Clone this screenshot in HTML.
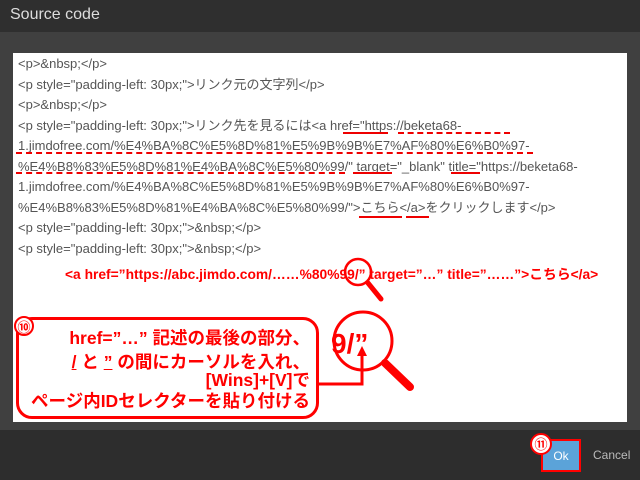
<!DOCTYPE html>
<html><head><meta charset="utf-8"><style>
body{margin:0;width:640px;height:480px;background:#404040;position:relative;overflow:hidden;font-family:"Liberation Sans","Noto Sans CJK JP",sans-serif}
.title{position:absolute;left:0;top:0;width:640px;height:32px;background:#2f2f2f;color:#ddd;font-size:16px;line-height:30px;padding-left:10px;box-sizing:border-box}
.ta{position:absolute;left:13px;top:53px;width:614px;height:369px;background:#fff}
.l{position:absolute;left:5px;font-size:13px;color:#555;white-space:nowrap;line-height:16px}
.foot{position:absolute;left:0;top:430px;width:640px;height:50px;background:#2d2d2d}
.r{color:#f00;font-weight:bold}
.u{position:absolute;border-bottom:2px solid #e00}
.d{position:absolute;border-bottom:2px dashed #e00}
.call{position:absolute;left:16px;top:317px;width:303px;height:102px;border:3px solid #f00;border-radius:16px;background:#fff;box-sizing:border-box}
.ct{position:absolute;right:6px;text-align:right;color:#f00;font-weight:bold;font-size:17.5px;line-height:20px;white-space:nowrap}
.num{position:absolute;width:20px;height:20px;border-radius:50%;background:#fff;border:2px solid #f00;color:#f00;font-size:13px;font-weight:bold;text-align:center;line-height:20px;box-sizing:border-box}
</style></head><body>
<div class="title">Source code</div>
<div class="ta">
<div class="l" style="top:3px">&lt;p&gt;&amp;nbsp;&lt;/p&gt;</div>
<div class="l" style="top:24px">&lt;p style="padding-left: 30px;"&gt;リンク元の文字列&lt;/p&gt;</div>
<div class="l" style="top:44px">&lt;p&gt;&amp;nbsp;&lt;/p&gt;</div>
<div class="l" style="top:65px">&lt;p style="padding-left: 30px;"&gt;リンク先を見るには&lt;a href="https://beketa68-</div>
<div class="l" style="top:85px">1.jimdofree.com/%E4%BA%8C%E5%8D%81%E5%9B%9B%E7%AF%80%E6%B0%97-</div>
<div class="l" style="top:106px">%E4%B8%83%E5%8D%81%E4%BA%8C%E5%80%99/" target="_blank" title="https://beketa68-</div>
<div class="l" style="top:126px">1.jimdofree.com/%E4%BA%8C%E5%8D%81%E5%9B%9B%E7%AF%80%E6%B0%97-</div>
<div class="l" style="top:147px">%E4%B8%83%E5%8D%81%E4%BA%8C%E5%80%99/"&gt;こちら&lt;/a&gt;をクリックします&lt;/p&gt;</div>
<div class="l" style="top:167px">&lt;p style="padding-left: 30px;"&gt;&amp;nbsp;&lt;/p&gt;</div>
<div class="l" style="top:188px">&lt;p style="padding-left: 30px;"&gt;&amp;nbsp;&lt;/p&gt;</div>
<div class="u" style="left:330px;top:79px;width:45px"></div>
<div class="d" style="left:385px;top:79px;width:112px"></div>
<div class="d" style="left:3px;top:99px;width:517px"></div>
<div class="d" style="left:3px;top:119px;width:329px"></div>
<div class="u" style="left:340px;top:119px;width:39px"></div>
<div class="u" style="left:438px;top:119px;width:29px"></div>
<div class="u" style="left:346px;top:163px;width:43px"></div>
<div class="u" style="left:393px;top:163px;width:23px"></div>
<div class="l r" style="top:214px;left:52px;font-size:13.8px;color:#f00">&lt;a href=”https://abc.jimdo.com/……%80%99/” target=”…” title=”……”&gt;こちら&lt;/a&gt;</div>
</div>
<div class="call">
<div class="ct" style="top:8px">href=”…” 記述の最後の部分、</div>
<div class="ct" style="top:32px"><u>/</u> と <u>”</u> の間にカーソルを入れ、</div>
<div class="ct" style="top:50px">[Wins]+[V]で</div>
<div class="ct" style="top:71px">ページ内IDセレクターを貼り付ける</div>
</div>
<div class="num" style="left:14px;top:316px">⑩</div>
<svg style="position:absolute;left:0;top:0" width="640" height="480">
<circle cx="358" cy="272" r="13" fill="none" stroke="#f00" stroke-width="2.5"/>
<line x1="368" y1="283" x2="381" y2="299" stroke="#f00" stroke-width="5" stroke-linecap="round"/>
<circle cx="363" cy="341" r="29" fill="#fff" stroke="#f00" stroke-width="3"/>
<line x1="385" y1="363" x2="410" y2="387" stroke="#f00" stroke-width="8" stroke-linecap="round"/>
<text x="331" y="353" font-family="Liberation Sans" font-weight="bold" font-size="28" fill="#f00">9/”</text>
<polyline points="318,384 362,384 362,353" fill="none" stroke="#f00" stroke-width="3"/>
<polygon points="362,346 357,356 367,356" fill="#f00"/>
</svg>
<div class="foot"></div>
<div style="position:absolute;left:541px;top:439px;width:40px;height:33px;background:#5ba3d9;border:2px solid #f00;box-sizing:border-box;color:#fff;font-size:12px;text-align:center;line-height:30px">Ok</div>
<div class="num" style="left:530px;top:433px;width:22px;height:22px">⑪</div>
<div style="position:absolute;left:593px;top:448px;color:#bbb;font-size:12px">Cancel</div>
</body></html>
